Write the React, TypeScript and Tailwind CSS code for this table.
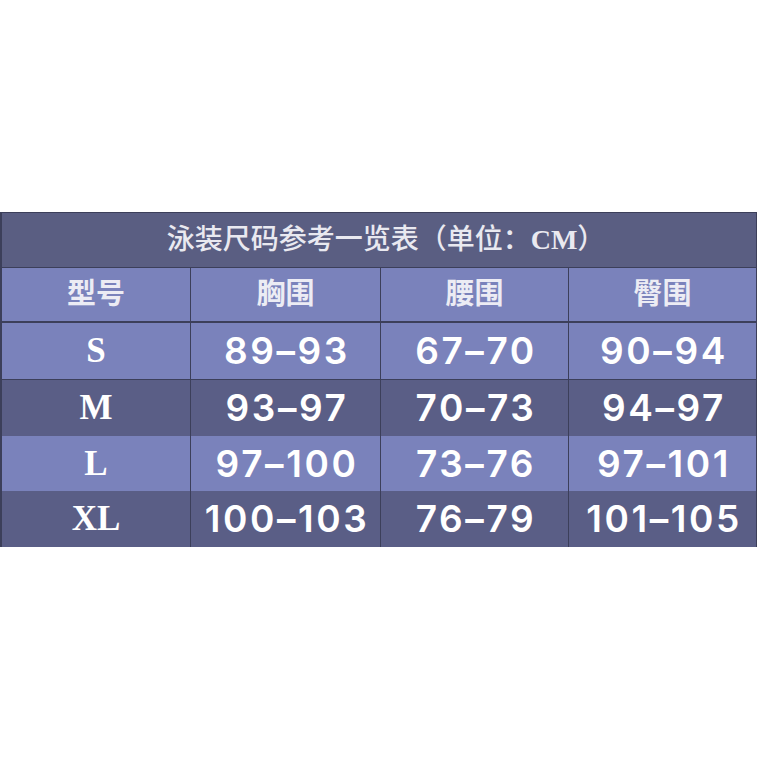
import React from "react";

const rows = [
  { size: "S", a: "89–93", b: "67–70", c: "90–94", dark: false, h: "h-[57px]" },
  { size: "M", a: "93–97", b: "70–73", c: "94–97", dark: true, h: "h-[56px]" },
  { size: "L", a: "97–100", b: "73–76", c: "97–101", dark: false, h: "h-[55px]" },
  { size: "XL", a: "100–103", b: "76–79", c: "101–105", dark: true, h: "h-[56px]" },
];

const serif = { fontFamily: '"Liberation Serif", "Noto Sans CJK SC", serif' };
const cjk = { fontFamily: '"Liberation Serif", "Noto Sans CJK SC", serif' };
const num = { fontFamily: 'Inter, "Liberation Sans", sans-serif' };

export default function App() {
  return (
    <div className="w-[760px] h-[760px] bg-white pt-[212px]">
      <div className="w-[757px] border-l-2 border-t border-r border-[#3c3f5a] bg-[#3c3f5a]">
        <div
          className="h-[55px] bg-[#5a5e82] flex items-center justify-center pl-[14px] text-[28px] text-[#e9e9f0] font-medium border-b border-[#3c3f5a]"
          style={cjk}
        >
          泳装尺码参考一览表（单位：<span className="font-bold">CM</span>）
        </div>
        <div className="grid grid-cols-[188px_189px_187px_187px] gap-x-px h-[55px] border-b-2 border-[#3c3f5a]">
          {["型号", "胸围", "腰围", "臀围"].map((t) => (
            <div
              key={t}
              className="bg-[#7a82bb] flex items-center justify-center text-[29px] text-[#ececf4] font-bold"
              style={cjk}
            >
              {t}
            </div>
          ))}
        </div>
        {rows.map((r, i) => (
          <div
            key={r.size}
            className={`grid grid-cols-[188px_189px_187px_187px] gap-x-px ${r.h} ${i < rows.length - 1 ? "border-b-2" : ""} border-[#3c3f5a]`}
          >
            <div
              className={`${r.dark ? "bg-[#5a5e86]" : "bg-[#7a82bb]"} flex items-center justify-center text-[35px] font-bold text-white`}
              style={serif}
            >
              {r.size}
            </div>
            {[r.a, r.b, r.c].map((v, j) => (
              <div
                key={j}
                className={`${r.dark ? "bg-[#5a5e86]" : "bg-[#7a82bb]"} flex items-center justify-center pl-[3px] text-[37px] font-semibold text-white tracking-[0.07em]`}
                style={num}
              >
                {v}
              </div>
            ))}
          </div>
        ))}
      </div>
    </div>
  );
}
